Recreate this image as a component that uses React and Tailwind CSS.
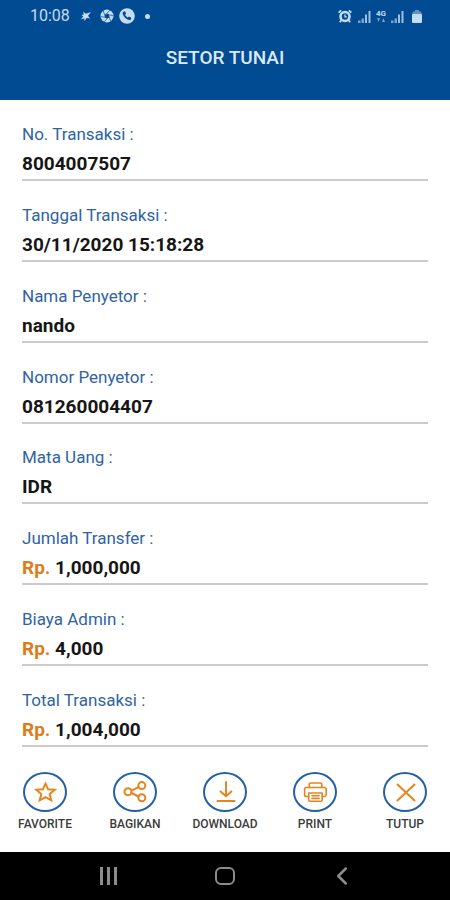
import { ChevronLeft } from 'lucide-react';

const FIELDS = [
  { label: 'No. Transaksi :', value: '8004007507' },
  { label: 'Tanggal Transaksi :', value: '30/11/2020 15:18:28' },
  { label: 'Nama Penyetor :', value: 'nando' },
  { label: 'Nomor Penyetor :', value: '081260004407' },
  { label: 'Mata Uang :', value: 'IDR' },
  { label: 'Jumlah Transfer :', value: '1,000,000', currency: 'Rp.' },
  { label: 'Biaya Admin :', value: '4,000', currency: 'Rp.' },
  { label: 'Total Transaksi :', value: '1,004,000', currency: 'Rp.' },
];

const ACTIONS = [
  { label: 'FAVORITE', Icon: StarIcon },
  { label: 'BAGIKAN', Icon: ShareIcon },
  { label: 'DOWNLOAD', Icon: DownloadIcon },
  { label: 'PRINT', Icon: PrintIcon },
  { label: 'TUTUP', Icon: CloseIcon },
];

function ActionSvg({ children }) {
  return (
    <svg
      viewBox="0 0 24 24"
      className="w-6 h-6"
      fill="none"
      stroke="#e8841f"
      strokeWidth="2"
      strokeLinecap="round"
      strokeLinejoin="round"
      aria-hidden="true"
    >
      {children}
    </svg>
  );
}

function StarIcon() {
  return (
    <ActionSvg>
      <path d="M12.500 3.600l2.600 5.700 6.600.5-5 4.200 1.600 6.300-5.800-3.100-5.800 3.100 1.600-6.300-5-4.200 6.600-.5z" strokeLinejoin="miter" />
    </ActionSvg>
  );
}

function ShareIcon() {
  return (
    <ActionSvg>
      <circle cx="5" cy="11.800" r="3.500" />
      <circle cx="18.800" cy="5.600" r="3.500" />
      <circle cx="18.800" cy="17.800" r="3.500" />
      <path d="M8.500 10.600l7-3.500M8.500 13l7 3.500" />
    </ActionSvg>
  );
}

function DownloadIcon() {
  return (
    <ActionSvg>
      <path d="M13 2v14M7.600 11.400l5.400 4.800 5.400-4.800M4.500 21h17" />
    </ActionSvg>
  );
}

function PrintIcon() {
  return (
    <ActionSvg>
      <g strokeWidth="1.6">
        <path d="M6.200 7.500V4.200A1.200 1.200 0 0 1 7.400 3h10.200a1.200 1.200 0 0 1 1.200 1.200v3.300" />
        <path d="M5.700 16.500H3.400a1.800 1.800 0 0 1-1.800-1.800V9.300a1.800 1.800 0 0 1 1.800-1.800h18a1.800 1.800 0 0 1 1.800 1.800v5.400a1.800 1.800 0 0 1-1.800 1.800h-2.200" />
        <path d="M5.700 13h13.500v7a1.200 1.200 0 0 1-1.200 1.200H6.900A1.200 1.200 0 0 1 5.700 20z" />
        <path d="M9 15.800h7M9 18.400h7" />
      </g>
    </ActionSvg>
  );
}

function CloseIcon() {
  return (
    <ActionSvg>
      <path d="M4.500 4.500l17 16M21.500 4.500l-17 16" />
    </ActionSvg>
  );
}

function SignalIcon() {
  return (
    <svg viewBox="0 0 13 13" className="w-[13px] h-[13px]" fill="currentColor" aria-hidden="true">
      <path d="M0 10.500h2.500V13H0zM3.500 8.500H6V13H3.500z" opacity="0.6" />
      <path d="M7 4.500h2V13H7zM10.500 1h2v12h-2z" opacity="0.8" />
    </svg>
  );
}

function StatusBar() {
  return (
    <div className="flex items-center justify-between h-8 pl-[30px] pr-7 text-[#c5dcf5]">
      <div className="flex items-center">
        <span className="w-[50px] text-base">10:08</span>
        <svg viewBox="0 0 12 12" className="w-3 h-3" fill="currentColor" aria-hidden="true">
          <path d="M3.200 1.500l2.600 2.200L11 2 8 5.800l2 2.700-3.200-.7L4.500 11l-.3-2.800L.8 9.600l2.400-3.200L1.500 5l2.300-.6z" />
        </svg>
        <svg viewBox="0 0 14 14" className="w-[14px] h-[14px] ml-2" aria-hidden="true">
          <circle cx="7" cy="7" r="6.500" fill="currentColor" />
          <path d="M7 4.300l2.400 1.500v2.600L7 9.800 4.600 8.400V5.800z" fill="#004b91" />
          <path d="M7 4.300L10 1M9.400 5.800l3.800 1M9.400 8.400l1.300 3.800M7 9.800L4 13M4.600 8.400l-3.800-1M4.600 5.800L3.300 1.800" stroke="#004b91" strokeWidth="0.700" />
        </svg>
        <svg viewBox="0 0 16 16" className="w-4 h-4 ml-[5px]" aria-hidden="true">
          <circle cx="8" cy="8" r="7.800" fill="currentColor" />
          <path d="M4.400 3.800l1.500-.5 1.200 2.300-1 1.200c.5 1.100 1.500 2.100 2.700 2.700l1.200-1 2.300 1.300-.5 1.600c-.8.900-2.600.6-4.500-.7-2.100-1.500-3.600-3.800-3.700-5.500 0-.6.300-1.100.8-1.400z" fill="#004b91" />
        </svg>
        <span className="w-[5px] h-[5px] ml-[10px] rounded-full bg-current" />
      </div>

      <div className="flex items-center">
        <svg viewBox="0 0 14 14" className="w-[14px] h-[14px]" fill="none" stroke="currentColor" aria-hidden="true">
          <circle cx="7" cy="7.500" r="4.500" strokeWidth="2.600" />
          <path d="M7 5.300v2.500h1.800" strokeWidth="1.200" />
          <path d="M.6 3.600l2.600-2.300M13.400 3.600l-2.600-2.300M3.500 11l-1.700 2.200M10.500 11l1.700 2.200" strokeWidth="1.800" />
        </svg>
        <span className="ml-[6px]"><SignalIcon /></span>
        <span className="flex flex-col items-center w-[10px] ml-[5px]">
          <span className="text-[8px] leading-[8px] font-bold">4G</span>
          <svg viewBox="0 0 8 4" className="w-2 h-1" fill="currentColor" opacity="0.6" aria-hidden="true">
            <path d="M0 0h3L1.500 4zM5 4h3L6.500 0z" />
          </svg>
        </span>
        <span className="ml-[5px]"><SignalIcon /></span>
        <svg viewBox="0 0 10 13" className="w-[10px] h-[13px] ml-2" fill="currentColor" aria-hidden="true">
          <path d="M3 0h4v1.500h2l1 2.500H0l1-2.500h2z" opacity="0.5" />
          <rect y="4" width="10" height="9" rx="1" />
        </svg>
      </div>
    </div>
  );
}

function Field({ label, value, currency }) {
  return (
    <div className="flex-1 flex flex-col justify-end border-b-2 border-[#cbcbcb]">
      <dt className="text-[17px] leading-5 text-[#2f64a3]">{label}</dt>
      <dd className="mt-2 mb-[3px] text-[19px] leading-6 font-bold text-[#161616]">
        {currency && <span className="text-[#e07b1a]">{currency} </span>}
        {value}
      </dd>
    </div>
  );
}

export default function App() {
  return (
    <div className="flex flex-col min-h-screen bg-white font-[Roboto,sans-serif]">
      <header className="bg-[#004b91]">
        <StatusBar />
        <h1 className="pt-[14px] pb-[30px] text-center text-[19px] leading-6 font-medium text-[#dbe9fa]">SETOR TUNAI</h1>
      </header>

      <dl className="flex-1 flex flex-col px-[22px]">
        {FIELDS.map((field) => (
          <Field key={field.label} {...field} />
        ))}
      </dl>

      {/* Receipt actions */}
      <div className="grid grid-cols-5 pt-[25px] pb-5">
        {ACTIONS.map(({ label, Icon }) => (
          <button key={label} type="button" className="flex flex-col items-center">
            <span className="flex items-center justify-center w-11 h-10 rounded-[50%] border-2 border-[#2360a5]">
              <Icon />
            </span>
            <span className="mt-1 text-[12px] leading-4 font-medium text-[#3c3c3c]">{label}</span>
          </button>
        ))}
      </div>

      {/* System navigation */}
      <nav className="grid grid-cols-3 items-center justify-items-center h-12 px-[50px] bg-black text-[#8c8c8c]">
        <button type="button" aria-label="Recent apps" className="flex gap-1">
          <span className="w-[3px] h-[18px] bg-current" />
          <span className="w-[3px] h-[18px] bg-current" />
          <span className="w-[3px] h-[18px] bg-current" />
        </button>
        <button type="button" aria-label="Home" className="w-5 h-[18px] rounded-md border-2 border-current" />
        <button type="button" aria-label="Back">
          <ChevronLeft size={30} strokeWidth={2} />
        </button>
      </nav>
    </div>
  );
}
